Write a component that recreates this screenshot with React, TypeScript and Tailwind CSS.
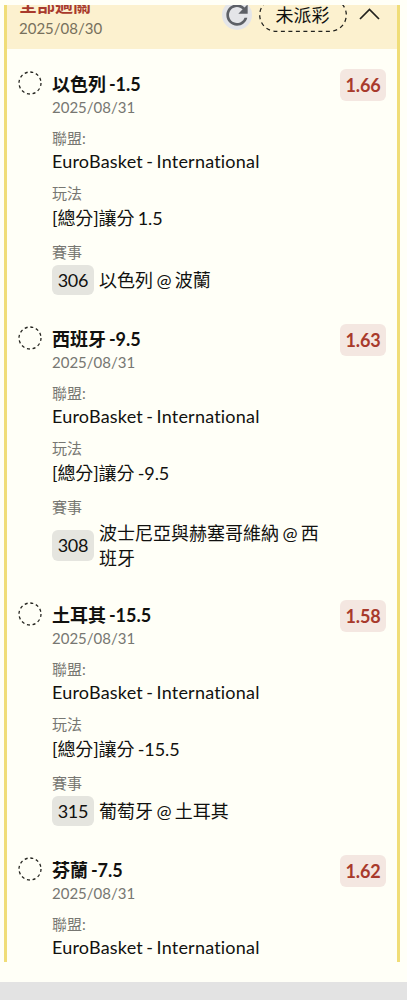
interface Leg {
  pick: string;
  line: string;
  odds: string;
  play: string;
  code: string;
  match: string;
}

const legs: Leg[] = [
  { pick: '以色列', line: '-1.5', odds: '1.66', play: '[總分]讓分 1.5', code: '306', match: '以色列 @ 波蘭' },
  { pick: '西班牙', line: '-9.5', odds: '1.63', play: '[總分]讓分 -9.5', code: '308', match: '波士尼亞與赫塞哥維納 @ 西班牙' },
  { pick: '土耳其', line: '-15.5', odds: '1.58', play: '[總分]讓分 -15.5', code: '315', match: '葡萄牙 @ 土耳其' },
  { pick: '芬蘭', line: '-7.5', odds: '1.62', play: '', code: '', match: '' },
];

function PendingCircle() {
  return (
    <svg className="h-6 w-6 shrink-0" viewBox="0 0 24 24" fill="none">
      <circle cx="12" cy="12" r="11" stroke="#24241f" strokeWidth="1.3" strokeDasharray="3 2.76" />
    </svg>
  );
}

function RefreshButton() {
  return (
    <button className="flex h-[30px] w-[30px] shrink-0 items-center justify-center rounded-full bg-[#e4e5e8]">
      <svg className="h-8 w-8 shrink-0" viewBox="0 0 24 24" fill="#5d6066">
        <path d="M17.65 6.35C16.2 4.9 14.21 4 12 4c-4.42 0-7.99 3.58-7.99 8s3.57 8 7.99 8c3.73 0 6.84-2.55 7.73-6h-2.08c-.82 2.33-3.04 4-5.65 4-3.31 0-6-2.69-6-6s2.69-6 6-6c1.66 0 3.14.69 4.22 1.78L13 11h7V4l-2.35 2.35z" />
      </svg>
    </button>
  );
}

function Label({ children }: { children: string }) {
  return <div className="h-5 text-[15px] leading-5 text-[#777772]">{children}</div>;
}

function LegRow({ leg }: { leg: Leg }) {
  return (
    <div className="flex pb-[30.75px]">
      <PendingCircle />
      <div className="ml-[10px] w-[270px]">
        <div className="h-[26px] text-lg leading-[26px] font-bold [word-spacing:-1.5px]">
          {leg.pick} {leg.line}
        </div>
        <div className="h-5 text-[15px] leading-5 text-[#777772]">2025/08/31</div>
        <div className="mt-[11px]">
          <Label>聯盟:</Label>
          <div className="h-[26px] leading-[26px] tracking-[0.21px] whitespace-nowrap [word-spacing:-1.5px]">
            EuroBasket - International
          </div>
        </div>
        {leg.play && (
          <>
            <div className="mt-[9px]">
              <Label>玩法</Label>
              <div className="mt-[2px] h-[25px] leading-[26px] tracking-[-0.1px] [word-spacing:-1.2px]">{leg.play}</div>
            </div>
            <div className="mt-[12px]">
              <Label>賽事</Label>
              <div className="mt-[3px] flex items-center">
                <span className="flex h-[30.5px] w-[42px] shrink-0 items-center justify-center rounded-md bg-[#e5e5df] tracking-[-0.2px]">
                  {leg.code}
                </span>
                <span className="relative top-px ml-[5px] w-[223px] leading-[25.5px] [word-spacing:-1.2px]">
                  {leg.match}
                </span>
              </div>
            </div>
          </>
        )}
      </div>
      <span className="-mt-[2px] ml-auto flex h-8 w-[46px] items-center justify-center rounded-md bg-[#f4e7e1] font-bold tracking-[-0.2px] text-[#a83a2c]">
        {leg.odds}
      </span>
    </div>
  );
}

export default function App() {
  return (
    <div className="h-[1000px] overflow-hidden bg-[#e3e3e3] font-[Lato,'Noto_Sans_CJK_TC',sans-serif] text-lg text-[#11110f]">
      <div className="h-[982px] bg-[#fffff7] pt-[5px] pr-[7px] pl-1">
        <div className="flex h-[957px] flex-col overflow-hidden border-x-[3px] border-[#f0dd78]">
          <div className="h-11 shrink-0 overflow-hidden bg-[#fcf1cf]">
            <div className="-mt-[11px] flex pr-[17.5px] pl-3">
              <div className="-mt-[2px]">
                <div className="h-[26px] leading-[26px] font-bold text-[#a83a2c]">全部過關</div>
                <div className="-mt-px h-[22px] text-[15px] leading-[22px] text-[#77705c]">2025/08/30</div>
              </div>
              <div className="ml-auto flex h-[41px] items-center">
                <RefreshButton />
                <div className="relative ml-[7px] flex h-[34px] w-[88px] items-center justify-center">
                  <svg className="absolute inset-0 h-full w-full" viewBox="0 0 88 34" fill="none">
                    <rect x="0.7" y="0.7" width="86.6" height="32.6" rx="16.3" stroke="#22221e" strokeWidth="1.3" strokeDasharray="4 3.5" />
                  </svg>
                  <span>未派彩</span>
                </div>
                <svg className="-mt-[2px] ml-3 h-3 w-[21px]" viewBox="0 0 21 12" fill="none">
                  <path d="M1 11l9.5-9.5L20 11" stroke="#22221e" strokeWidth="1.7" />
                </svg>
              </div>
            </div>
          </div>
          <div className="px-[11px] pt-[21.5px]">
            {legs.map((leg) => (
              <LegRow key={leg.odds} leg={leg} />
            ))}
          </div>
        </div>
      </div>
    </div>
  );
}
